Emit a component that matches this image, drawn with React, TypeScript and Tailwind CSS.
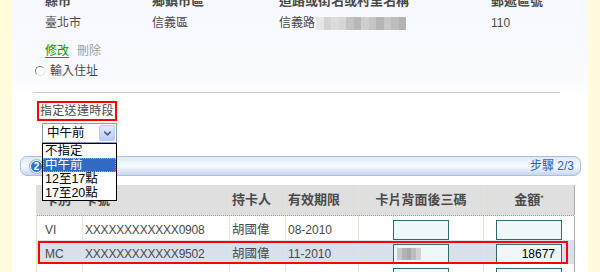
import { ChevronDown } from "lucide-react";

const ADDR_BLUR = [
  "#e6e6e6", "#d3d3d3", "#dcdcdc", "#d6d6d6", "#c3c3c3", "#b7b7b7",
  "#cfcfcf", "#c5c5c5", "#b5b5b5", "#c7c7c7", "#bdbdbd", "#b3b3b3",
];

const CVV_BLUR = ["#c9c9c9", "#b2b2b2", "#a9a9a9", "#bcbcbc", "#d2d2d2"];

type CardRow = {
  type: string;
  no: string;
  holder: string;
  exp: string;
  cvvHidden?: boolean;
  amount?: string;
  selected?: boolean;
};

const CARDS: CardRow[] = [
  { type: "VI", no: "XXXXXXXXXXXX0908", holder: "胡國偉", exp: "08-2010" },
  { type: "MC", no: "XXXXXXXXXXXX9502", holder: "胡國偉", exp: "11-2010", cvvHidden: true, amount: "18677", selected: true },
  { type: "", no: "", holder: "", exp: "" },
];

const OPTIONS = ["不指定", "中午前", "12至17點", "17至20點"];

function Blur({ colors, className }: { colors: string[]; className: string }) {
  return (
    <div className={`flex ${className}`}>
      {colors.map((c, i) => (
        <span key={i} className="flex-1 h-full" style={{ backgroundColor: c }} />
      ))}
    </div>
  );
}

function AddressBlock() {
  return (
    <div className="ml-[12px] -mt-[7px] text-[#4a4a4a]">
      <div className="grid grid-cols-[107px_127px_212px_1fr] h-[16px] leading-[16px] text-[13px] font-bold">
        <div>縣市</div>
        <div>鄉鎮市區</div>
        <div>道路或街名或村里名稱</div>
        <div>郵遞區號</div>
      </div>
      <div className="grid grid-cols-[107px_127px_212px_1fr] h-[16px] leading-[16px] mt-[6px] text-[12px]">
        <div>臺北市</div>
        <div>信義區</div>
        <div className="flex items-center">
          <span>信義路</span>
          <Blur colors={ADDR_BLUR} className="w-[90px] h-[13px] ml-[1px]" />
        </div>
        <div>110</div>
      </div>
    </div>
  );
}

function TimeSelect() {
  return (
    <div className="relative ml-[9px] mt-[2px] w-[75px] h-[20px] border border-[#7f9db9] bg-white flex items-center">
      <span className="pl-[4px] text-[12.5px] text-black flex-1">中午前</span>
      <span className="w-[16px] h-[16px] mr-[1px] rounded-[2px] border border-[#b9cbee] bg-gradient-to-b from-[#e2eafc] to-[#b8ccf5] flex items-center justify-center">
        <ChevronDown className="w-[11px] h-[11px] text-[#4d6185]" strokeWidth={3.5} />
      </span>
      <ul className="absolute left-[-1px] top-[19px] w-[75px] border border-black bg-white z-10 text-[12.5px] leading-[14px]">
        {OPTIONS.map((o) => (
          <li
            key={o}
            className={
              o === "中午前"
                ? "h-[14px] pl-[2px] bg-[#316ac5] text-white outline-1 outline-dotted outline-[#e8a040] -outline-offset-1"
                : "h-[14px] pl-[2px] text-black"
            }
          >
            {o}
          </li>
        ))}
      </ul>
    </div>
  );
}

function StepBar() {
  return (
    <div className="-ml-[13px] mt-[13px] w-[561px] h-[23px] rounded-[7px] border border-[#a7bfe0] bg-gradient-to-b from-[#dfe8f6] via-[#f7fafe] to-[#c6d7ef] flex items-center justify-between pl-[9px] pr-[6px]">
      <span className="w-[13px] h-[13px] rounded-full bg-[#2f6fd2] border border-white shadow-[0_0_0_1px_#9db6dc] text-white text-[10px] font-bold leading-[11px] flex items-center justify-center">
        2
      </span>
      <span className="text-[12px] text-[#1b5fc6]">步驟 2/3</span>
    </div>
  );
}

const COLS = "grid grid-cols-[46px_147px_56px_73px_125px_91px]";
const CELL = "border-r border-[#e4e4d6] flex items-center";
const LAST = "border-r border-[#a9a9a9] flex items-center justify-center";

function CardTable() {
  return (
    <div className="ml-[3px] mt-[9px] w-[538px] border-l border-[#e2e2d2] text-[#4a4a4a]">
      <div className={`${COLS} h-[31px] bg-[#dfdfdf] border-b border-dotted border-[#9c9c9c] text-[13px] font-bold`}>
        <div className={`${CELL} pl-[8px]`}>卡別</div>
        <div className={`${CELL} pl-[1px]`}>卡號</div>
        <div className={`${CELL} pl-[2px]`}>持卡人</div>
        <div className={`${CELL} pl-[2px]`}>有效期限</div>
        <div className={`${CELL} justify-center`}>卡片背面後三碼</div>
        <div className={LAST}>
          金額<span className="text-[9px] font-normal self-start mt-[7px]">*</span>
        </div>
      </div>
      {CARDS.map((c, i) => (
        <div
          key={i}
          className={`${COLS} relative h-[24px] ${c.selected ? "bg-[#d8e0eb]" : "bg-white"} text-[12px]`}
        >
          <div className={`${CELL} pt-[4px] pl-[8px]`}>{c.type}</div>
          <div className={`${CELL} pt-[4px] pl-[2px] tracking-[-0.2px]`}>{c.no}</div>
          <div className={`${CELL} pt-[4px] pl-[2px] text-[12.5px]`}>{c.holder}</div>
          <div className={`${CELL} pt-[4px] pl-[2px]`}>{c.exp}</div>
          <div className={`${CELL} items-start justify-center pt-[4px]`}>
            <div className="w-[56px] h-[20px] border border-[#2f6a72] bg-[#eff7f9] flex items-center pl-[3px]">
              {c.cvvHidden ? <Blur colors={CVV_BLUR} className="w-[24px] h-[12px]" /> : null}
            </div>
          </div>
          <div className={`${LAST} items-start pt-[4px]`}>
            <div className="w-[66px] h-[20px] border border-[#2f6a72] bg-[#eff7f9] flex items-center justify-end pr-[6px] text-[12px] text-black">
              {c.amount}
            </div>
          </div>
          {c.selected ? (
            <div className="absolute left-[1px] top-[1px] w-[530px] h-[23px] border-2 border-[#ff0000] pointer-events-none" />
          ) : null}
        </div>
      ))}
    </div>
  );
}

export default function App() {
  return (
    <div className="w-[600px] h-[272px] overflow-hidden flex bg-[#fffbdb] font-['Liberation_Sans','Noto_Sans_CJK_TC',sans-serif]">
      <div className="w-[12px] shrink-0" />
      <main className="w-[576px] shrink-0 bg-gradient-to-b from-[#f7f9ff] via-[#fafbff] via-30% to-white to-35% pl-[21px] flex flex-col">
        <AddressBlock />

        <div className="ml-[12px] mt-[12px] h-[16px] leading-[16px] text-[12px] flex gap-[8px]">
          <span className="text-[#009900] underline underline-offset-2">修改</span>
          <span className="text-[#a0a0a0]">刪除</span>
        </div>

        <div className="ml-[2px] mt-[4px] h-[16px] flex items-center gap-[5px] text-[12px] text-[#4a4a4a]">
          <span className="w-[10px] h-[10px] rounded-full border border-t-[#808080] border-l-[#808080] border-b-[#e0e0e0] border-r-[#e0e0e0] bg-white" />
          <span>輸入住址</span>
        </div>

        <div className="mt-[13px] w-[527px] border-t border-[#cfcfcf]" />

        <div className="ml-[4px] mt-[8px] w-[80px] h-[20px] border-2 border-[#ff0000] flex items-center pl-[1px] text-[12px] text-[#4a4a4a] tracking-[0.3px]">
          指定送達時段
        </div>

        <TimeSelect />
        <StepBar />
        <CardTable />
      </main>
      <div className="w-[12px] shrink-0" />
    </div>
  );
}
